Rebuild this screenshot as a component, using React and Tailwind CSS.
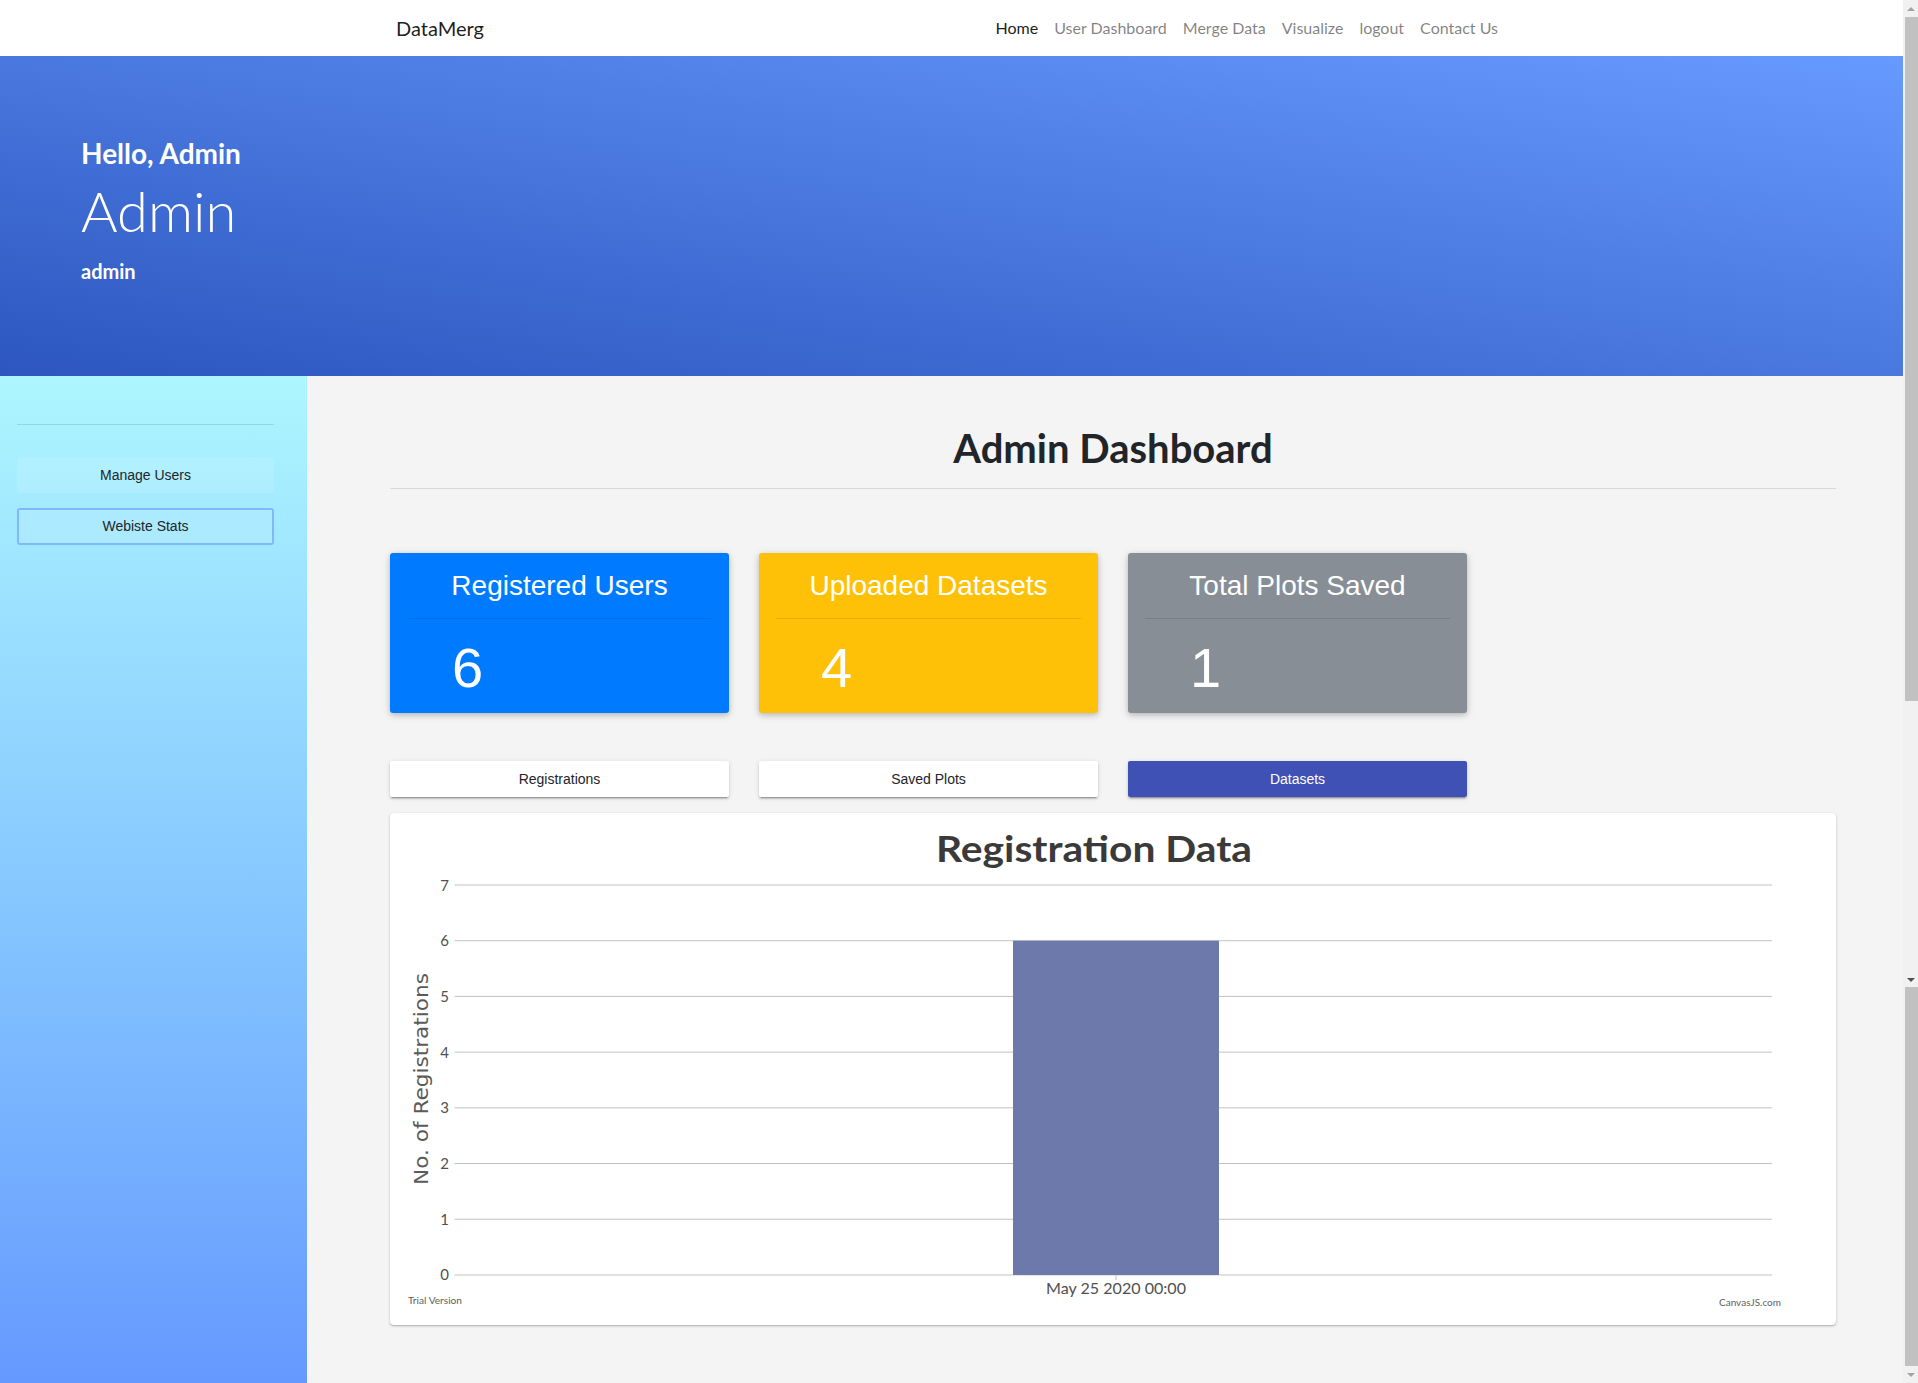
import React from "react";

function StatCard({ title, value, color }) {
  return (
    <div className={`h-[160px] rounded-[3px] px-[17px] pt-[16px] text-white shadow-[0_2px_5px_rgba(0,0,0,0.16),0_2px_10px_rgba(0,0,0,0.12)] ${color}`}>
      <h3 className="text-center text-[28px] leading-[1.2]">{title}</h3>
      <div className="mt-[15px] h-px bg-black/10" />
      <div className="mt-[15px] pl-[45px] text-[56px] leading-[1.2]">{value}</div>
    </div>
  );
}

function TabButton({ label, active }) {
  return (
    <button
      className={`h-[36px] rounded-[2px] text-[14px] shadow-[0_2px_2px_rgba(0,0,0,0.14),0_3px_1px_-2px_rgba(0,0,0,0.2),0_1px_5px_rgba(0,0,0,0.12)] ${
        active ? "bg-[#3f51b5] text-white" : "bg-white text-[#212529]"
      }`}
    >
      {label}
    </button>
  );
}

function Chart() {
  const top = 72;
  const step = 55.71;
  const ys = [7, 6, 5, 4, 3, 2, 1, 0];
  return (
    <svg viewBox="0 0 1446 512" width="1446" height="512" className="block">
      <text
        x="704"
        y="49"
        textAnchor="middle"
        fontFamily="Lato, 'Open Sans', sans-serif"
        fontWeight="700"
        fontSize="36"
        fill="#3a3a3a"
        textLength="316"
        lengthAdjust="spacingAndGlyphs"
      >
        Registration Data
      </text>
      {ys.map((v, i) => {
        const y = top + step * i;
        return (
          <g key={v}>
            <line x1="64.5" x2="1382" y1={y} y2={y} stroke="#c2c2c2" strokeWidth="1" />
            <text
              x="59"
              y={y + 5.5}
              textAnchor="end"
              fontFamily="Lato, 'Open Sans', sans-serif"
              fontSize="15"
              fill="#505050"
            >
              {v}
            </text>
          </g>
        );
      })}
      <rect x="623" y={top + step} width="206" height={step * 6} fill="#6d78ab" />
      <line x1="726" x2="726" y1={top + step * 7} y2={top + step * 7 + 5} stroke="#c2c2c2" />
      <text
        x="726"
        y="481"
        textAnchor="middle"
        fontFamily="Lato, 'Open Sans', sans-serif"
        fontSize="15"
        fill="#505050"
        textLength="140"
        lengthAdjust="spacingAndGlyphs"
      >
        May 25 2020 00:00
      </text>
      <text
        transform="translate(38 266) rotate(-90)"
        textAnchor="middle"
        fontFamily="'DejaVu Sans', Verdana, sans-serif"
        fontSize="20"
        fill="#5a5a5a"
        textLength="212"
        lengthAdjust="spacingAndGlyphs"
      >
        No. of Registrations
      </text>
      <text
        x="18"
        y="491"
        fontFamily="Lato, 'Open Sans', sans-serif"
        fontSize="10"
        fill="#606060"
        textLength="54"
        lengthAdjust="spacingAndGlyphs"
      >
        Trial Version
      </text>
      <text
        x="1329"
        y="493"
        fontFamily="Lato, 'Open Sans', sans-serif"
        fontSize="10"
        fill="#606060"
        textLength="62"
        lengthAdjust="spacingAndGlyphs"
      >
        CanvasJS.com
      </text>
    </svg>
  );
}

function Scrollbar() {
  return (
    <div className="flex h-[1383px] w-[15px] shrink-0 flex-col bg-[#f1f1f1]">
      <div className="flex h-[17px] items-center justify-center">
        <div className="h-0 w-0 border-x-[4px] border-b-[4px] border-x-transparent border-b-[#a3a3a3]" />
      </div>
      <div className="ml-[2px] h-[684px] bg-[#c1c1c1]" />
      <div className="flex-1" />
      <div className="flex h-[15px] items-center justify-center">
        <div className="h-0 w-0 border-x-[4px] border-t-[4px] border-x-transparent border-t-[#505050]" />
      </div>
      <div className="ml-[2px] h-[379px] bg-[#c1c1c1]" />
      <div className="flex h-[17px] items-center justify-center">
        <div className="h-0 w-0 border-x-[4px] border-t-[4px] border-x-transparent border-t-[#a3a3a3]" />
      </div>
    </div>
  );
}

export default function App() {
  const links = ["Home", "User Dashboard", "Merge Data", "Visualize", "logout", "Contact Us"];
  return (
    <div className="flex h-[1383px] w-[1918px] overflow-hidden bg-[#f4f4f4] font-['Liberation_Sans',Arial,sans-serif]">
      <div className="flex w-[1903px] shrink-0 flex-col">
        <nav className="flex h-[56px] shrink-0 items-center justify-between bg-white pl-[396px] pr-[397px] font-['Lato',sans-serif]">
          <span className="text-[20px] text-black/90">DataMerg</span>
          <ul className="flex">
            {links.map((l, i) => (
              <li key={l} className={`px-2 text-[16px] ${i === 0 ? "text-black/90" : "text-black/50"}`}>
                {l}
              </li>
            ))}
          </ul>
        </nav>
        <header className="h-[320px] shrink-0 bg-linear-to-tr from-[#2d56bf] to-[#679afe] pl-[81px] pt-[81px] font-['Lato',sans-serif] text-white">
          <h3 className="text-[28px] font-bold leading-[1.2]">Hello, Admin</h3>
          <h1 className="mt-[6px] text-[56px] font-light leading-[1.2]">Admin</h1>
          <p className="mt-[15px] text-[20px] font-bold leading-[1.2]">admin</p>
        </header>
        <div className="flex flex-1">
          <aside className="w-[307px] shrink-0 bg-linear-to-b from-[#aef6fe] to-[#6699ff] pl-[17px] pr-[33px] pt-[48px]">
            <div className="h-px bg-[#94d6e6]" />
            <button className="mt-[32px] block h-[36px] w-full rounded-[4px] bg-white/10 text-[14px] text-[#212529]">
              Manage Users
            </button>
            <button className="mt-[15px] block h-[37px] w-full rounded-[3px] border-2 border-[#80b8fb] bg-white/10 text-[14px] text-[#212529]">
              Webiste Stats
            </button>
          </aside>
          <main className="w-[1596px] shrink-0 pl-[83px] pr-[67px] pt-[48px]">
            <h2 className="text-center font-['Lato',sans-serif] text-[40px] font-bold leading-[48px] text-[#212529]">
              Admin Dashboard
            </h2>
            <div className="mt-[16px] h-px bg-[#d9d9d9]" />
            <div className="mt-[64px] grid grid-cols-4 gap-x-[30px]">
              <StatCard title="Registered Users" value="6" color="bg-[#007bff]" />
              <StatCard title="Uploaded Datasets" value="4" color="bg-[#ffc107]" />
              <StatCard title="Total Plots Saved" value="1" color="bg-[#878e96]" />
            </div>
            <div className="mt-[48px] grid grid-cols-4 gap-x-[30px]">
              <TabButton label="Registrations" />
              <TabButton label="Saved Plots" />
              <TabButton label="Datasets" active />
            </div>
            <div className="mt-[16px] h-[512px] overflow-hidden rounded-[4px] bg-white shadow-[0_1px_3px_rgba(0,0,0,0.2),0_1px_1px_rgba(0,0,0,0.12)]">
              <Chart />
            </div>
          </main>
        </div>
      </div>
      <Scrollbar />
    </div>
  );
}
